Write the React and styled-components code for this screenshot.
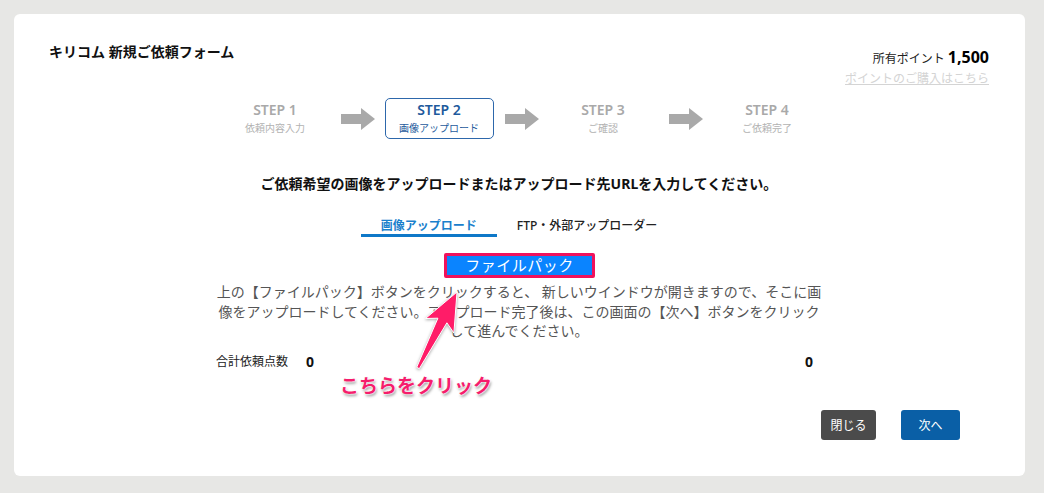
import React from 'react'
import styled, { createGlobalStyle } from 'styled-components'

const steps = [
  { label: 'STEP 1', sub: '依頼内容入力' },
  { label: 'STEP 2', sub: '画像アップロード', active: true },
  { label: 'STEP 3', sub: 'ご確認' },
  { label: 'STEP 4', sub: 'ご依頼完了' },
]

function StepArrow() {
  return (
    <ArrowBox>
      <svg width="34" height="22" viewBox="0 0 34 22">
        <path d="M0 6 H20 V0 L34 11 L20 22 V16 H0 Z" fill="#a9a9a9" />
      </svg>
    </ArrowBox>
  )
}

export default function App() {
  return (
    <>
      <GlobalStyle />
      <Card>
        <Header>
          <Title>キリコム 新規ご依頼フォーム</Title>
          <Points>
            <PointLine>
              所有ポイント <b>1,500</b>
            </PointLine>
            <BuyLink>ポイントのご購入はこちら</BuyLink>
          </Points>
        </Header>

        <Steps>
          {steps.map((s, i) => (
            <React.Fragment key={s.label}>
              {i > 0 && <StepArrow />}
              <Step $active={s.active}>
                <StepLabel $active={s.active}>{s.label}</StepLabel>
                <StepSub $active={s.active}>{s.sub}</StepSub>
              </Step>
            </React.Fragment>
          ))}
        </Steps>

        <Heading>ご依頼希望の画像をアップロードまたはアップロード先URLを入力してください。</Heading>

        <Tabs>
          <Tab $active>画像アップロード</Tab>
          <Tab>FTP・外部アップローダー</Tab>
        </Tabs>

        <PickWrap>
          <PickButton>ファイルパック</PickButton>
        </PickWrap>

        <Note>
          上の【ファイルパック】ボタンをクリックすると、 新しいウインドウが開きますので、そこに画像をアップロードしてください。アップロード完了後は、この画面の【次へ】ボタンをクリックして進んでください。
        </Note>

        <Total>
          <TotalLabel>合計依頼点数</TotalLabel>
          <TotalNum>0</TotalNum>
          <TotalRight>0</TotalRight>
        </Total>

        <Footer>
          <Button $dark>閉じる</Button>
          <Button>次へ</Button>
        </Footer>

        <Pointer width="70" height="95" viewBox="0 0 70 95">
          <polygon
            points="57,7 53.9,48.1 46.9,37.8 19.3,83.7 16.7,82.3 37.9,33.2 25.5,33.5"
            fill="#ff1c68"
            stroke="#ffffff"
            strokeWidth="1"
            strokeLinejoin="round"
          />
        </Pointer>
        <Callout>こちらをクリック</Callout>
      </Card>
    </>
  )
}

const GlobalStyle = createGlobalStyle`
  body {
    margin: 0;
    background: #e7e7e5;
    font-family: "Noto Sans", "Noto Sans CJK JP", sans-serif;
    color: #222;
  }
`

const Card = styled.div`
  position: relative;
  box-sizing: border-box;
  width: 1011px;
  height: 462px;
  margin: 14px;
  padding: 28px 36px 0 35px;
  background: #fff;
  border-radius: 6px;
  display: flex;
  flex-direction: column;
`

const Header = styled.div`
  display: flex;
  justify-content: space-between;
  align-items: flex-start;
  height: 45px;
`

const Title = styled.h1`
  margin: 0;
  font-size: 14px;
  line-height: 20px;
  font-weight: 700;
  color: #111;
`

const Points = styled.div`
  margin-top: 5px;
  text-align: right;
`

const PointLine = styled.div`
  font-size: 12px;
  line-height: 20px;
  color: #222;

  b {
    font-size: 16px;
    font-weight: 700;
    color: #000;
  }
`

const BuyLink = styled.a`
  display: block;
  font-size: 12px;
  line-height: 20px;
  color: #d4d4d4;
  text-decoration: underline;
`

const Steps = styled.div`
  display: flex;
  justify-content: center;
  margin-top: 11px;
  padding-left: 4px;
`

const Step = styled.div`
  box-sizing: border-box;
  width: 109px;
  height: 41px;
  display: flex;
  flex-direction: column;
  align-items: center;
  justify-content: center;
  gap: 1px;
  border: 1.5px solid ${({ $active }) => ($active ? '#2d67ab' : 'transparent')};
  border-radius: 5px;
`

const StepLabel = styled.div`
  font-size: 14px;
  line-height: 18px;
  font-weight: 600;
  color: ${({ $active }) => ($active ? '#1e5a9c' : '#a9a9a9')};
`

const StepSub = styled.div`
  font-size: 10px;
  line-height: 16px;
  color: ${({ $active }) => ($active ? '#1e5a9c' : '#b2b2b2')};
`

const ArrowBox = styled.div`
  display: flex;
  align-items: center;
  margin: 0 10px 0 11px;
  padding-top: 1px;
`

const Heading = styled.h2`
  margin: 35px 0 0;
  text-align: center;
  font-size: 14px;
  line-height: 20px;
  font-weight: 700;
  color: #111;
`

const Tabs = styled.div`
  display: flex;
  justify-content: center;
  margin-top: 23px;
`

const Tab = styled.div`
  padding: 1px 20px 0;
  font-size: 12px;
  line-height: 16px;
  font-weight: ${({ $active }) => ($active ? 700 : 500)};
  color: ${({ $active }) => ($active ? '#1a80cc' : '#222')};
  border-bottom: 3px solid ${({ $active }) => ($active ? '#0e78c8' : 'transparent')};
`

const PickWrap = styled.div`
  display: flex;
  justify-content: center;
  margin-top: 16px;
`

const PickButton = styled.button`
  box-sizing: border-box;
  width: 151px;
  height: 25px;
  padding: 0;
  margin-left: 1px;
  border: 3px solid #f0125c;
  border-radius: 2px;
  background: #0a84ff;
  color: #fff;
  font-family: inherit;
  font-size: 15px;
  line-height: 19px;
  letter-spacing: 0.5px;
`

const Note = styled.p`
  width: 606px;
  margin: 4px auto 0;
  text-align: center;
  font-size: 14px;
  line-height: 19.6px;
  color: #555;
`

const Total = styled.div`
  display: flex;
  align-items: center;
  width: 606px;
  margin: 11px auto 0;
  padding: 0 9px 0 0;
  box-sizing: border-box;
  line-height: 20px;
`

const TotalLabel = styled.span`
  font-size: 12px;
  color: #222;
`

const TotalNum = styled.span`
  margin-left: 18px;
  font-size: 14px;
  font-weight: 700;
  color: #111;
`

const TotalRight = styled(TotalNum)`
  margin-left: auto;
`

const Footer = styled.div`
  display: flex;
  justify-content: flex-end;
  gap: 25px;
  margin-top: 38px;
  padding-right: 29px;
`

const Button = styled.button`
  height: 30px;
  padding: 0;
  width: ${({ $dark }) => ($dark ? '55px' : '59px')};
  border: none;
  border-radius: 3px;
  background: ${({ $dark }) => ($dark ? '#4b4b4b' : '#0a5fa6')};
  color: #fff;
  font-family: inherit;
  font-size: 12px;
`

const Pointer = styled.svg`
  position: absolute;
  left: 386px;
  top: 271px;
  filter: drop-shadow(0 1px 1.5px rgba(0, 0, 0, 0.35));
`

const Callout = styled.div`
  position: absolute;
  left: 326px;
  top: 358px;
  font-size: 19px;
  line-height: 28px;
  font-weight: 700;
  color: #f51d6c;
  text-shadow: 0 0 1px #fff, 0 0 2px #fff, 0 0 2px #fff, 1px 2px 3px rgba(0, 0, 0, 0.45);
`
